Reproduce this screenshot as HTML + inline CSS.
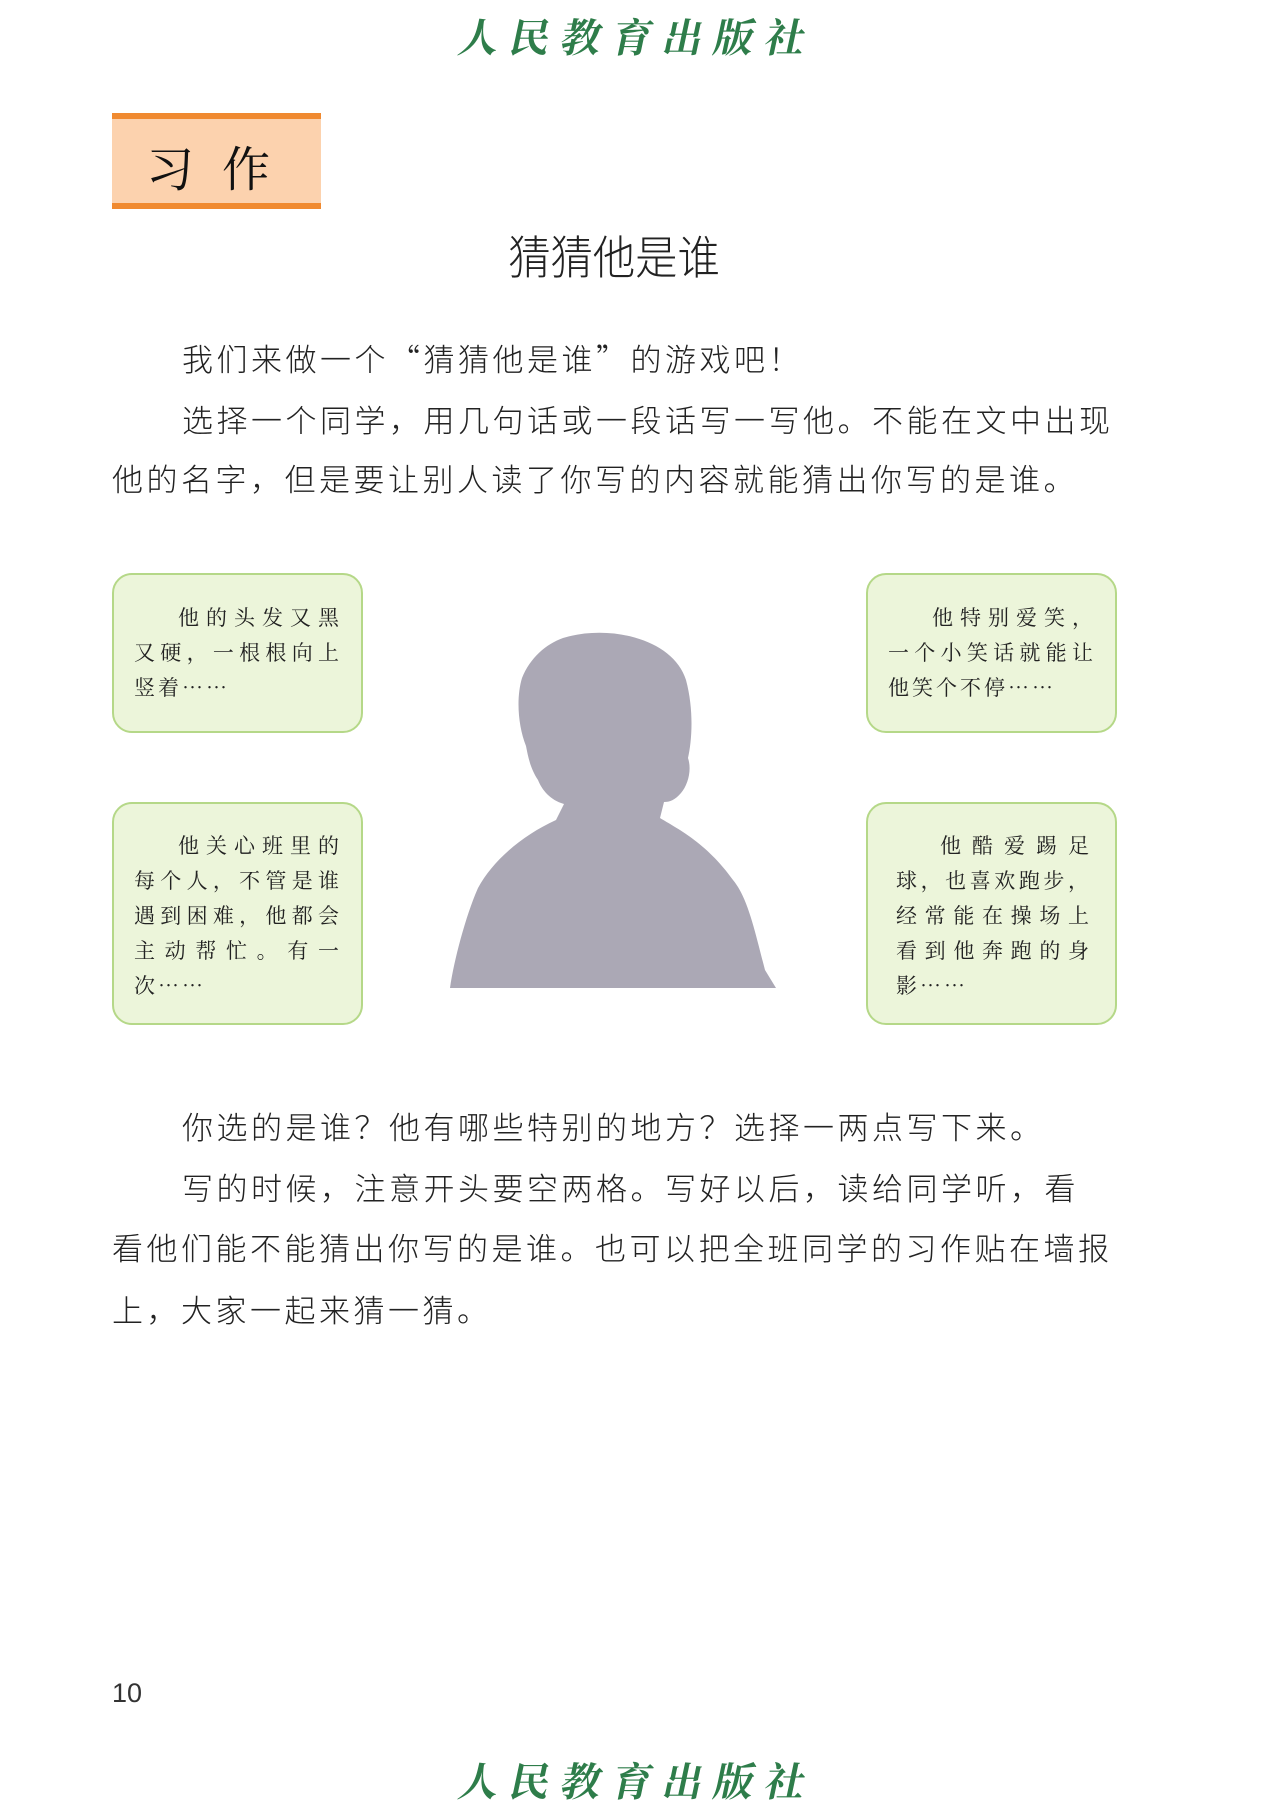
<!DOCTYPE html>
<html><head><meta charset="utf-8"><style>
*{margin:0;padding:0;box-sizing:border-box}
body{width:1275px;height:1800px;background:#fff;position:relative;overflow:hidden;font-family:"Liberation Serif","Noto Serif CJK SC","Noto Sans CJK SC",serif;color:#222}
.logo{position:absolute;left:460px;width:360px;height:46px;font-family:"Noto Serif CJK SC",serif;font-size:40px;color:#2e7d4a;letter-spacing:11px;line-height:46px;white-space:nowrap;transform:skewX(-12deg);font-weight:bold}
.tag{position:absolute;left:112px;top:113px;width:209px;height:96px;background:#fcd2ae;border-top:6px solid #f08a30;border-bottom:6px solid #f08a30}
.tag span{position:absolute;top:12px;font-size:48px;color:#111}
.title{position:absolute;top:222px;left:0;width:1228px;text-align:center;font-size:46px;font-family:"Noto Sans CJK SC",sans-serif;font-weight:300;transform:scaleX(.92)}
.p{position:absolute;left:112px;font-size:31px;letter-spacing:3.5px;white-space:nowrap;font-family:"Noto Sans CJK SC",sans-serif;font-weight:300;line-height:40px}
.b{position:absolute;width:251px;background:#ecf5da;border:2px solid #b5d888;border-radius:20px;font-size:21px;line-height:35px;padding:25px 22px 0 20px;font-family:"Noto Serif CJK SC",serif}
.b div{text-align:justify;text-align-last:justify;height:35px}
.b div.l{text-align-last:left;letter-spacing:3px}
.b div.i{padding-left:44px}
</style></head><body>
<div class="logo" style="top:13px">人民教育出版社</div>
<div class="tag"><span style="left:34px">习</span><span style="left:110px">作</span></div>
<div class="title">猜猜他是谁</div>
<div class="p" style="top:338px;left:182px">我们来做一个“猜猜他是谁”的游戏吧！</div>
<div class="p" style="top:399px;left:182px">选择一个同学，用几句话或一段话写一写他。不能在文中出现</div>
<div class="p" style="top:458px">他的名字，但是要让别人读了你写的内容就能猜出你写的是谁。</div>

<div class="b" style="left:112px;top:573px;height:160px"><div class="i">他的头发又黑</div><div>又硬，一根根向上</div><div class="l">竖着……</div></div>
<div class="b" style="left:866px;top:573px;height:160px"><div class="i">他特别爱笑，</div><div>一个小笑话就能让</div><div class="l">他笑个不停……</div></div>
<div class="b" style="left:112px;top:802px;height:223px;padding-top:24px"><div class="i">他关心班里的</div><div>每个人，不管是谁</div><div>遇到困难，他都会</div><div>主动帮忙。有一</div><div class="l">次……</div></div>
<div class="b" style="left:866px;top:802px;height:223px;padding-top:24px;padding-left:28px;padding-right:26px"><div class="i">他酷爱踢足</div><div>球，也喜欢跑步，</div><div>经常能在操场上</div><div>看到他奔跑的身</div><div class="l">影……</div></div>

<svg style="position:absolute;left:448px;top:630px" width="330" height="360" viewBox="0 0 330 360">
<path fill="#aba8b5" d="M115 8 C160 -6 225 8 238 50 C246 80 244 110 240 128 C244 140 240 155 233 163 C227 170 222 172 216 172 L212 188 C228 198 258 212 285 250 C300 268 307 302 317 340 L328 358 L2 358 C6 330 18 285 30 258 C45 230 75 205 108 190 L116 174 C102 170 94 160 90 150 C82 138 80 126 78 116 C70 96 68 68 74 48 C82 28 98 14 115 8 Z"/>
</svg>

<div class="p" style="top:1106px;left:182px">你选的是谁？他有哪些特别的地方？选择一两点写下来。</div>
<div class="p" style="top:1167px;left:182px">写的时候，注意开头要空两格。写好以后，读给同学听，看</div>
<div class="p" style="top:1227px">看他们能不能猜出你写的是谁。也可以把全班同学的习作贴在墙报</div>
<div class="p" style="top:1289px">上，大家一起来猜一猜。</div>

<div style="position:absolute;left:112px;top:1678px;font-family:'Liberation Sans',sans-serif;font-size:27px;color:#333">10</div>
<div class="logo" style="top:1757px">人民教育出版社</div>
</body></html>
